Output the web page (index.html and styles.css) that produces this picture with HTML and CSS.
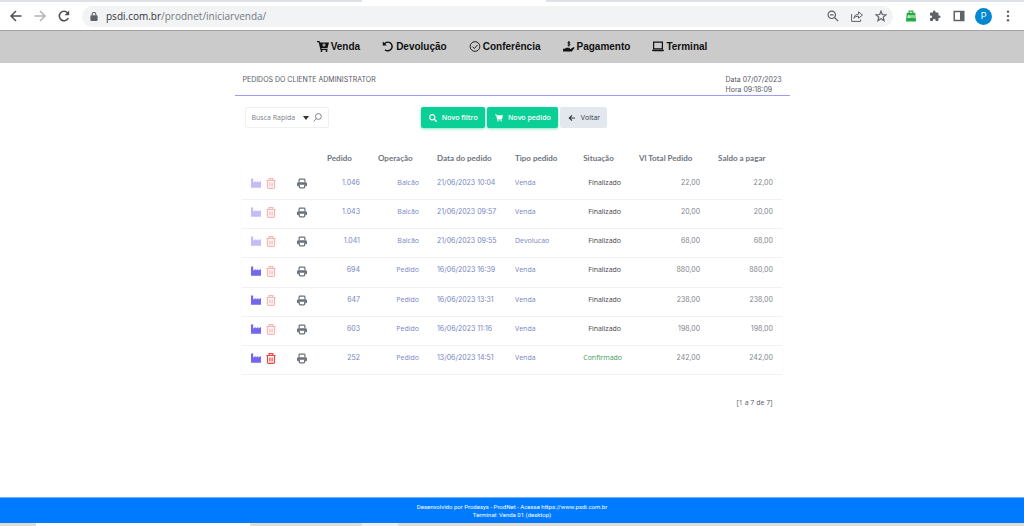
FILE: index.html
```
<!DOCTYPE html>
<html lang="pt-BR">
<head>
<meta charset="utf-8">
<title>Pedidos do cliente</title>
<link rel="stylesheet" href="styles.css">
</head>
<body>
<svg class="defs" aria-hidden="true">
  <symbol id="i-factory" viewBox="0 0 10 10"><path d="M0 0h2.200v4l2.500-1.600V4l2.600-1.600V4L10 2.400v6.800H0z"/></symbol>
  <symbol id="i-trash" viewBox="0 0 10 11"><path fill="none" stroke="currentColor" stroke-width="1.200" d="M.4 2.500h9.200M3.200 2.300V.6h3.600v1.700M1.500 2.600v6.600q0 1.200 1.200 1.200h4.600q1.200 0 1.200-1.200V2.600M3.900 4.400v4.200M6.100 4.400v4.200"/></symbol>
  <symbol id="i-print" viewBox="0 0 11 11"><path fill="none" stroke="currentColor" stroke-width="1.300" d="M2.300 4V1.600q0-.9.900-.9h4.600q.9 0 .9.900V4M2.600 7v2.400q0 .9.900.9h4q.9 0 .9-.9V7"/><path d="M1.800 4h7.400Q11 4 11 5.600V7.500q0 .9-.9.900H9V7H2v1.400H.9Q0 8.400 0 7.500V5.600Q0 4 1.800 4z"/></symbol>
  <symbol id="i-cart" viewBox="0 0 24 22"><path d="M0 0h5l1 3h18l-3 11H8.500l.5 1.500h12V18H7L3.300 2.500H0z"/><circle cx="9" cy="20" r="2"/><circle cx="19" cy="20" r="2"/></symbol>
</svg>

<header class="browser">
  <div class="tabstrip"><span class="tab"></span></div>
  <div class="navbar">
    <button class="nav-btn" aria-label="Voltar"><svg viewBox="0 0 12 12"><path d="M11.500 6H1M6 1L1 6l5 5"/></svg></button>
    <button class="nav-btn dim" aria-label="Avançar"><svg viewBox="0 0 12 12"><path d="M.5 6H11M6 1l5 5-5 5"/></svg></button>
    <button class="nav-btn" aria-label="Recarregar"><svg viewBox="0 0 12 12"><path d="M10.300 8A4.700 4.700 0 1 1 9.600 3"/><path class="solid" d="M11.200.6v4.600H6.600z"/></svg></button>
    <div class="address">
      <svg class="lock" viewBox="0 0 8 10"><rect y="3.500" width="8" height="6.500" rx="1"/><path fill="none" stroke="currentColor" stroke-width="1.200" d="M2 4V2.500a2 2 0 0 1 4 0V4"/></svg>
      <p class="url"><b>psdi.com.br</b>/prodnet/iniciarvenda/</p>
      <button class="addr-btn" aria-label="Zoom"><svg viewBox="0 0 12 12"><circle cx="4.800" cy="4.800" r="3.700"/><path d="M7.500 7.500l3.700 3.700M3 4.800h3.600"/></svg></button>
      <button class="addr-btn" aria-label="Compartilhar"><svg viewBox="0 0 12 12"><path stroke-width="1" d="M.6 4v7.400h9V9.500M2.800 8.300q.4-4 4.700-4.200V1.800L11.500 5 7.500 8.200V6.100q-3-.1-4.700 2.200z"/></svg></button>
      <button class="addr-btn" aria-label="Favorito"><svg viewBox="0 0 12 12"><path d="M6 1.200l1.300 3.300 3.700.3-2.800 2.300.9 3.600L6 8.800l-3.100 1.900.9-3.600L1 4.800l3.700-.3z"/></svg></button>
    </div>
    <button class="ext" aria-label="AVG"><svg viewBox="0 0 12 13"><path fill="none" stroke="#2fa84f" stroke-width="1.200" d="M4 4V1.200h4V4"/><path fill="#22ac46" d="M1.500 3h9L11.500 12.500H.5z"/><text class="avg" x="6" y="9" text-anchor="middle">AVG</text></svg></button>
    <button class="ext" aria-label="Extensões"><svg viewBox="0 0 24 24"><path d="M20.500 11H19V7c0-1.100-.9-2-2-2h-4V3.500a2.500 2.500 0 0 0-5 0V5H4c-1.100 0-2 .9-2 2v3.800h1.500a2.700 2.700 0 0 1 0 5.400H2V20c0 1.100.9 2 2 2h3.800v-1.500a2.700 2.700 0 0 1 5.400 0V22H17c1.100 0 2-.9 2-2v-4h1.500a2.500 2.500 0 0 0 0-5z"/></svg></button>
    <button class="ext" aria-label="Painel lateral"><svg viewBox="0 0 12 12"><path fill-rule="evenodd" d="M.5.8h11v10.400H.5zM2 2.300v7.400h5V2.300z"/></svg></button>
    <button class="avatar">P</button>
    <button class="ext" aria-label="Menu"><svg viewBox="0 0 12 12"><circle cx="6" cy="1.700" r="1.200"/><circle cx="6" cy="6" r="1.200"/><circle cx="6" cy="10.300" r="1.200"/></svg></button>
  </div>
</header>

<nav class="menu">
  <a href="#venda"><svg class="ico" viewBox="0 0 24 22"><use href="#i-cart"/><path stroke="#cbcbcb" stroke-width="2" d="M14 4.500v7M10.500 8h7"/></svg>Venda</a>
  <a href="#devolucao"><svg class="ico" viewBox="0 0 12 12"><path fill="none" stroke="currentColor" stroke-width="1.600" d="M1.500 4A4.700 4.700 0 1 1 2.700 9.500"/><path d="M.3.500l4.500 4.500H.3z"/></svg>Devolução</a>
  <a href="#conferencia"><svg class="ico" viewBox="0 0 12 12"><g fill="none" stroke="currentColor"><circle cx="6" cy="6" r="5.300"/><path d="M3.300 6.200l2 2 3.500-4"/></g></svg>Conferência</a>
  <a href="#pagamento"><svg class="ico" viewBox="0 0 13 12"><path d="M0 8.500h2l1.500-1.200h3.300q1.200.1.700 1.200l-2 .3h2.700l3-2q1.500-.4 1.300.7L9.500 11.500H0z"/><path fill="none" stroke="currentColor" d="M7.800 1.500q-3-.6-2.700.7.200.7 1.500.8 1.500.3 1 1.300-.6.700-2.700.2M6.300 0v6"/></svg>Pagamento</a>
  <a href="#terminal"><svg class="ico" viewBox="0 0 13 12"><path fill="none" stroke="currentColor" stroke-width="1.300" d="M1.700 8.500V1.200h9.600v7.300z"/><path d="M0 9.500h13v.5q0 1.200-1.200 1.200H1.200Q0 11.200 0 10z"/></svg>Terminal</a>
</nav>

<main class="page">
  <div class="title-row">
    <h1>PEDIDOS DO CLIENTE ADMINISTRATOR</h1>
    <p>Data 07/07/2023<br>Hora 09:18:09</p>
  </div>
  <div class="toolbar">
    <div class="search">
      <input type="text" placeholder="Busca Rapida" aria-label="Busca Rapida">
      <button aria-label="Opções"><svg class="caret" viewBox="0 0 6 4"><path d="M0 0h6L3 4z"/></svg></button>
      <button aria-label="Buscar"><svg class="lens" viewBox="0 0 9 9"><path fill="none" stroke="#7a8088" d="M8.300 3.500a2.900 2.900 0 1 1-5.800 0a2.900 2.900 0 1 1 5.800 0M3.400 5.500L.5 8.400"/></svg></button>
    </div>
    <div class="actions">
      <button class="btn green"><svg viewBox="0 0 512 512"><path d="M505 442.700L405.300 343c-4.500-4.500-10.600-7-17-7H372c27.600-35.300 44-79.700 44-128C416 93.100 322.900 0 208 0S0 93.100 0 208s93.100 208 208 208c48.300 0 92.700-16.400 128-44v16.300c0 6.400 2.500 12.500 7 17l99.700 99.700c9.400 9.400 24.600 9.400 33.900 0l28.300-28.300c9.400-9.400 9.400-24.600.1-34zM208 336c-70.700 0-128-57.200-128-128 0-70.700 57.200-128 128-128 70.700 0 128 57.200 128 128 0 70.700-57.200 128-128 128z"/></svg>Novo filtro</button>
      <button class="btn green"><svg viewBox="0 0 24 22"><use href="#i-cart"/></svg>Novo pedido</button>
      <button class="btn grey"><svg viewBox="0 0 12 12"><path fill="none" stroke="currentColor" stroke-width="1.800" d="M10.500 6H2M6 2L2 6l4 4"/></svg>Voltar</button>
    </div>
  </div>

  <table class="orders">
    <colgroup><col class="c-act"><col class="c-prn"><col class="c-ped"><col class="c-op"><col class="c-date"><col class="c-type"><col class="c-sit"><col class="c-tot"><col class="c-sal"></colgroup>
    <thead>
      <tr><td></td><td></td><th>Pedido</th><th>Operação</th><th>Data do pedido</th><th>Tipo pedido</th><th>Situação</th><th>Vl Total Pedido</th><th>Saldo a pagar</th></tr>
    </thead>
    <tbody>
      <tr><td class="acts"><button class="fac off" aria-label="Produção"><svg><use href="#i-factory"/></svg></button><button class="del off" aria-label="Excluir"><svg><use href="#i-trash"/></svg></button></td><td class="prn"><button aria-label="Imprimir"><svg><use href="#i-print"/></svg></button></td><td class="n num">1.046</td><td class="n">Balcão</td><td class="num">21/06/2023 10:04</td><td>Venda</td><td class="n done">Finalizado</td><td class="n num val">22,00</td><td class="n num val">22,00</td></tr>
      <tr><td class="acts"><button class="fac off" aria-label="Produção"><svg><use href="#i-factory"/></svg></button><button class="del off" aria-label="Excluir"><svg><use href="#i-trash"/></svg></button></td><td class="prn"><button aria-label="Imprimir"><svg><use href="#i-print"/></svg></button></td><td class="n num">1.043</td><td class="n">Balcão</td><td class="num">21/06/2023 09:57</td><td>Venda</td><td class="n done">Finalizado</td><td class="n num val">20,00</td><td class="n num val">20,00</td></tr>
      <tr><td class="acts"><button class="fac off" aria-label="Produção"><svg><use href="#i-factory"/></svg></button><button class="del off" aria-label="Excluir"><svg><use href="#i-trash"/></svg></button></td><td class="prn"><button aria-label="Imprimir"><svg><use href="#i-print"/></svg></button></td><td class="n num">1.041</td><td class="n">Balcão</td><td class="num">21/06/2023 09:55</td><td>Devolucao</td><td class="n done">Finalizado</td><td class="n num val">68,00</td><td class="n num val">68,00</td></tr>
      <tr class="tall"><td class="acts"><button class="fac" aria-label="Produção"><svg><use href="#i-factory"/></svg></button><button class="del off" aria-label="Excluir"><svg><use href="#i-trash"/></svg></button></td><td class="prn"><button aria-label="Imprimir"><svg><use href="#i-print"/></svg></button></td><td class="n num">694</td><td class="n">Pedido</td><td class="num">16/06/2023 16:39</td><td>Venda</td><td class="n done">Finalizado</td><td class="n num val">880,00</td><td class="n num val">880,00</td></tr>
      <tr><td class="acts"><button class="fac" aria-label="Produção"><svg><use href="#i-factory"/></svg></button><button class="del off" aria-label="Excluir"><svg><use href="#i-trash"/></svg></button></td><td class="prn"><button aria-label="Imprimir"><svg><use href="#i-print"/></svg></button></td><td class="n num">647</td><td class="n">Pedido</td><td class="num">16/06/2023 13:31</td><td>Venda</td><td class="n done">Finalizado</td><td class="n num val">238,00</td><td class="n num val">238,00</td></tr>
      <tr><td class="acts"><button class="fac" aria-label="Produção"><svg><use href="#i-factory"/></svg></button><button class="del off" aria-label="Excluir"><svg><use href="#i-trash"/></svg></button></td><td class="prn"><button aria-label="Imprimir"><svg><use href="#i-print"/></svg></button></td><td class="n num">603</td><td class="n">Pedido</td><td class="num">16/06/2023 11:16</td><td>Venda</td><td class="n done">Finalizado</td><td class="n num val">198,00</td><td class="n num val">198,00</td></tr>
      <tr><td class="acts"><button class="fac" aria-label="Produção"><svg><use href="#i-factory"/></svg></button><button class="del" aria-label="Excluir"><svg><use href="#i-trash"/></svg></button></td><td class="prn"><button aria-label="Imprimir"><svg><use href="#i-print"/></svg></button></td><td class="n num">252</td><td class="n">Pedido</td><td class="num">13/06/2023 14:51</td><td>Venda</td><td class="n conf">Confirmado</td><td class="n num val">242,00</td><td class="n num val">242,00</td></tr>
    </tbody>
  </table>
  <p class="count">[1 a 7 de 7]</p>
</main>

<footer class="footer">
  <p>Desenvolvido por Prodesys - ProdNet - Acesse https://www.psdi.com.br</p>
  <p>Terminal: Venda 01 (desktop)</p>
</footer>
<div class="taskbar"><span class="task-search"></span><span class="task-item"></span></div>
</body>
</html>
```
FILE: styles.css
```
* { box-sizing: border-box; }
body {
  margin: 0;
  min-height: 100vh;
  display: flex;
  flex-direction: column;
  background: #fff;
  color: #55595f;
  font: 7px/10px "Open Sans", sans-serif;
}
h1, p { margin: 0; font-size: inherit; font-weight: normal; }
button { padding: 0; border: 0; background: none; color: inherit; font: inherit; }
svg { display: block; fill: currentColor; }
.defs { position: absolute; width: 0; height: 0; }

/* browser frame */
.browser { background: #fff; border-bottom: 1px solid #a2a2a2; }
.tabstrip { display: flex; height: 2px; padding-left: 362px; background: #dee1e6; }
.tab { width: 184px; background: #fff; }
.navbar { display: flex; align-items: center; height: 28px; padding: 0 10px; color: #5f6368; }
.nav-btn { width: 12px; height: 12px; margin-right: 12px; }
.nav-btn svg { width: 12px; height: 12px; fill: none; stroke: #4c5055; stroke-width: 1.5; }
.nav-btn .solid { fill: #4c5055; stroke: none; }
.nav-btn.dim svg { stroke: #b0b2b5; }
.address { flex: 1; display: flex; align-items: center; height: 21px; padding: 0 6px 0 8px; border-radius: 11px; background: #f1f3f4; }
.lock { width: 8px; height: 9px; }
.url { flex: 1; margin-left: 8px; color: #75797e; font: 10px/16px "Open Sans", sans-serif; }
.url b { color: #303236; font-weight: normal; }
.addr-btn { width: 12px; margin-left: 12px; }
.addr-btn svg { width: 12px; height: 12px; fill: none; stroke: #5f6368; stroke-width: 1.2; }
.ext { width: 12px; margin-left: 12px; }
.ext svg { width: 12px; height: 12px; }
.avg { fill: #fff; font: bold 4px "Liberation Sans", sans-serif; }
.avatar { width: 17px; height: 17px; margin-left: 10px; border-radius: 50%; background: #0288d1; color: #fff; font: 9px/17px Roboto, sans-serif; }
.avatar + .ext { margin-left: 10px; }

/* main menu */
.menu { display: flex; justify-content: center; align-items: center; gap: 22px; height: 32px; padding-bottom: 1px; background: #cbcbcb; }
.menu a { display: flex; align-items: center; gap: 2px; color: #111; font: bold 10px/16px "Liberation Sans", sans-serif; text-decoration: none; }
.ico { width: 12px; height: 11px; }

/* page */
.page { flex: 1; width: 54.2%; margin: 0 auto; }
.title-row { display: flex; justify-content: space-between; padding: 12px 8px 0; border-bottom: 1px solid #9b9cf5; font-family: Inter, sans-serif; }
.toolbar { display: grid; grid-template-columns: 1fr auto 1fr; padding: 11px 6px 0 10px; }
.search { display: flex; align-items: center; justify-self: start; width: 84px; height: 21px; padding: 0 6px; gap: 4px; border: 1px solid #eff0f2; border-radius: 2px; }
.search input { flex: 1; min-width: 0; padding: 0; border: 0; outline: 0; font: inherit; }
.search input::placeholder { color: #7b8087; opacity: 1; }
.caret { width: 6px; height: 4px; fill: #333; }
.lens { width: 9px; height: 9px; }
.actions { display: flex; gap: 2px; }
.btn { display: flex; align-items: center; gap: 5px; height: 21px; padding: 0 7px 0 8px; border-radius: 2px; }
.btn svg { width: 8px; height: 8px; }
.btn.green { background: #0acf97; color: #fff; font-weight: 600; box-shadow: 0 1px 3px #0acf9780; }
.btn.grey { background: #e3e8ee; color: #343a40; }

.orders { width: 97.6%; margin: 20px auto 0; border-collapse: separate; border-spacing: 0; table-layout: fixed; }
.c-act { width: 8.1%; }
.c-prn { width: 6.1%; }
.c-ped { width: 9.4%; }
.c-op { width: 10.9%; }
.c-date { width: 14.4%; }
.c-type { width: 12.6%; }
.c-sit { width: 10.3%; }
.c-tot { width: 14.6%; }
.c-sal { width: 13.6%; }
.orders th { height: 23px; padding: 0 0 3px 9px; color: #6c757d; font: bold 8px/10px Lato, sans-serif; text-align: left; white-space: nowrap; }
.orders tbody td { height: 29px; padding: 0 9px 5px; border-bottom: 1px solid #f0f1f6; color: #7686c4; white-space: nowrap; }
.orders tbody .tall td { height: 30px; }
.orders tbody td:first-child { border-left: 1px solid #fafbfe; }
.orders tbody td:last-child { border-right: 1px solid #fafbfe; }
.orders .n { text-align: right; }
.orders .num { font-family: Inter, sans-serif; }
.orders tbody .done { color: #3f434a; }
.orders tbody .conf { color: #3f9a55; }
.orders tbody .val { color: #7f858c; }
.orders tbody .acts { padding: 0 0 3px 9px; }
.orders tbody .prn { padding: 0 0 3px 12px; }
.orders button { display: inline-block; vertical-align: middle; }
.orders svg { width: 10px; height: 11px; }
.fac { margin-right: 5px; color: #7466ee; }
.fac.off { color: #c4bcf6; }
.del { color: #f0423c; }
.del.off { color: #f9b3b0; }
.prn button { color: #68707a; }
.count { padding: 23px 17px 0; text-align: right; }

.footer { display: grid; align-content: center; min-height: 26px; padding: 3px 0; border-top: 1px solid #6fb0f5; background: #007bff; color: #fff; font: 6px/8px Roboto, sans-serif; text-align: center; }
.taskbar { display: flex; gap: 112px; height: 3px; padding-left: 36px; background: #e2ddd2; }
.task-search { width: 214px; background: #fff; }
.task-item { width: 36px; background: #f2efea; }
```
